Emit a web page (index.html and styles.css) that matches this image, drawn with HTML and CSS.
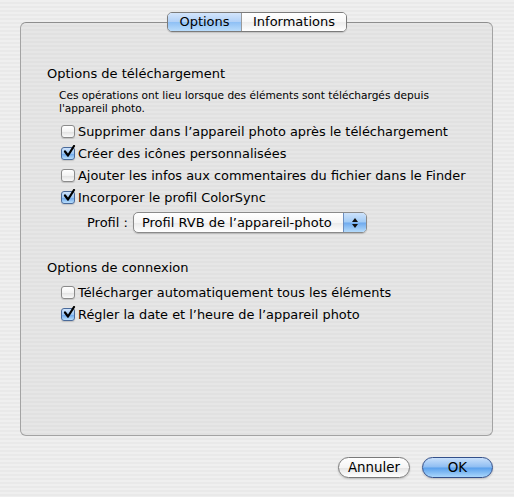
FILE: index.html
```html
<!DOCTYPE html>
<html lang="fr">
<head>
<meta charset="utf-8">
<title>Options</title>
<link rel="stylesheet" href="styles.css">
</head>
<body>
<div class="window">
  <div class="tabs">
    <div class="tab tab-active">Options</div>
    <div class="tab">Informations</div>
  </div>
  <div class="panel">
    <div class="heading">Options de téléchargement</div>
    <div class="desc">Ces opérations ont lieu lorsque des éléments sont téléchargés depuis<br>l'appareil photo.</div>
    <div class="group">
      <label class="row"><span class="cb"></span><span>Supprimer dans l’appareil photo après le téléchargement</span></label>
      <label class="row"><span class="cb cb-on"><svg viewBox="0 0 14 14" width="14" height="14"><path d="M3 6.5 L6 10.5 L12 1" fill="none" stroke="#000" stroke-width="2.2" stroke-linecap="round" stroke-linejoin="round"/></svg></span><span>Créer des icônes personnalisées</span></label>
      <label class="row"><span class="cb"></span><span>Ajouter les infos aux commentaires du fichier dans le Finder</span></label>
      <label class="row"><span class="cb cb-on"><svg viewBox="0 0 14 14" width="14" height="14"><path d="M3 6.5 L6 10.5 L12 1" fill="none" stroke="#000" stroke-width="2.2" stroke-linecap="round" stroke-linejoin="round"/></svg></span><span>Incorporer le profil ColorSync</span></label>
      <div class="profile">
        <span class="profile-label">Profil :</span>
        <div class="popup">
          <span class="popup-text">Profil RVB de l’appareil-photo</span>
          <span class="popup-arrows"><svg viewBox="0 0 8 12" width="8" height="12"><path d="M4 1 L7 5 L1 5 Z M4 11 L7 7 L1 7 Z" fill="#111"/></svg></span>
        </div>
      </div>
    </div>
    <div class="heading heading-2">Options de connexion</div>
    <div class="group">
      <label class="row"><span class="cb"></span><span>Télécharger automatiquement tous les éléments</span></label>
      <label class="row"><span class="cb cb-on"><svg viewBox="0 0 14 14" width="14" height="14"><path d="M3 6.5 L6 10.5 L12 1" fill="none" stroke="#000" stroke-width="2.2" stroke-linecap="round" stroke-linejoin="round"/></svg></span><span>Régler la date et l’heure de l’appareil photo</span></label>
    </div>
  </div>
  <div class="footer">
    <div class="btn">Annuler</div>
    <div class="btn btn-default">OK</div>
  </div>
</div>
</body>
</html>
```
FILE: styles.css
```css
html, body {
  margin: 0;
  padding: 0;
}
body {
  width: 514px;
  height: 497px;
  overflow: hidden;
  font-family: "DejaVu Sans", "Liberation Sans", sans-serif;
  font-size: 13px;
  color: #000;
  background: repeating-linear-gradient(to bottom, #efefef 0 2px, #e9e9e9 2px 4px);
}
.window {
  padding-top: 12px;
  display: flex;
  flex-direction: column;
}
.tabs {
  display: flex;
  align-self: flex-start;
  margin-left: 167px;
  height: 20px;
  margin-bottom: -10px;
  position: relative;
  z-index: 2;
  border: 1px solid #7b7b7b;
  border-radius: 5px;
  box-sizing: border-box;
  overflow: hidden;
  box-shadow: 0 1px 1px rgba(0,0,0,0.15);
}
.tab {
  display: flex;
  align-items: center;
  justify-content: center;
  padding: 0 12px;
  background: linear-gradient(to bottom, #ffffff 0%, #f7f7f7 50%, #ececec 51%, #ffffff 100%);
  font-size: 13px;
  line-height: 18px;
}
.tab + .tab {
  border-left: 1px solid #9a9a9a;
  width: 104px;
  padding: 0;
}
.tab-active {
  width: 73px;
  padding: 0;
  box-sizing: border-box;
  background: linear-gradient(to bottom, #d3e5fb 0%, #b2d1f7 48%, #8fc0f5 52%, #b9dcfb 100%);
}
.panel {
  margin: 0 21px 0 20px;
  height: 414px;
  box-sizing: border-box;
  border: 1px solid #a3a3a3;
  border-top-color: #8e8e8e;
  border-radius: 6px;
  background: repeating-linear-gradient(to bottom, #e6e6e6 0 2px, #e1e1e1 2px 4px);
  padding: 43px 0 0 26px;
  display: flex;
  flex-direction: column;
}
.heading {
  font-size: 13px;
  line-height: 16px;
}
.heading-2 {
  margin-top: 27px;
}
.desc {
  font-size: 10.6px;
  line-height: 13px;
  margin: 7px 0 0 12px;
}
.group {
  display: flex;
  flex-direction: column;
  margin-left: 14px;
  margin-top: 5px;
}
.row {
  display: flex;
  align-items: center;
  height: 22px;
  gap: 3px;
  font-size: 12.9px;
}
.cb {
  width: 14px;
  height: 13px;
  box-sizing: border-box;
  border: 1px solid #8a8a8a;
  border-radius: 3px;
  background: linear-gradient(to bottom, #ffffff 0%, #f3f3f3 50%, #e2e2e2 55%, #fafafa 100%);
  box-shadow: 0 1px 1px rgba(0,0,0,0.15);
  position: relative;
  flex: none;
}
.cb-on {
  border-color: #4a6a9a;
  background: linear-gradient(to bottom, #cfe3fb 0%, #9cc6f3 50%, #6fa9ec 55%, #b9defb 100%);
}
.cb svg {
  position: absolute;
  left: 0;
  top: -3px;
}
.profile {
  display: flex;
  align-items: center;
  margin-top: 4px;
  margin-left: 26px;
  gap: 5px;
  font-size: 13px;
}
.popup {
  display: flex;
  align-items: center;
  width: 234px;
  height: 21px;
  box-sizing: border-box;
  border: 1px solid #8a8a8a;
  border-radius: 5px;
  background: linear-gradient(to bottom, #ffffff 0%, #f6f6f6 50%, #ebebeb 55%, #ffffff 100%);
  box-shadow: 0 1px 1px rgba(0,0,0,0.18);
  overflow: hidden;
}
.popup-text {
  flex: 1;
  padding-left: 8px;
  font-size: 13px;
}
.popup-arrows {
  width: 22px;
  height: 100%;
  display: flex;
  align-items: center;
  justify-content: center;
  border-left: 1px solid #6d8fc0;
  background: linear-gradient(to bottom, #cde2fb 0%, #a2cbf5 48%, #6eaaee 52%, #b5dbfb 100%);
}
.footer {
  display: flex;
  justify-content: flex-end;
  gap: 12px;
  margin: 21px 21px 0 0;
}
.btn {
  height: 21px;
  box-sizing: border-box;
  width: 72px;
  border: 1px solid #7a7a7a;
  border-radius: 11px;
  display: flex;
  align-items: center;
  justify-content: center;
  font-size: 13.4px;
  background: linear-gradient(to bottom, #ffffff 0%, #f5f5f5 50%, #e6e6e6 55%, #ffffff 100%);
  box-shadow: 0 1px 2px rgba(0,0,0,0.2);
}
.btn-default {
  width: 71px;
  border-color: #34508a;
  background: linear-gradient(to bottom, #c9e0fb 0%, #8ebdf2 48%, #5aa0ec 52%, #a9d6fb 100%);
}
```
